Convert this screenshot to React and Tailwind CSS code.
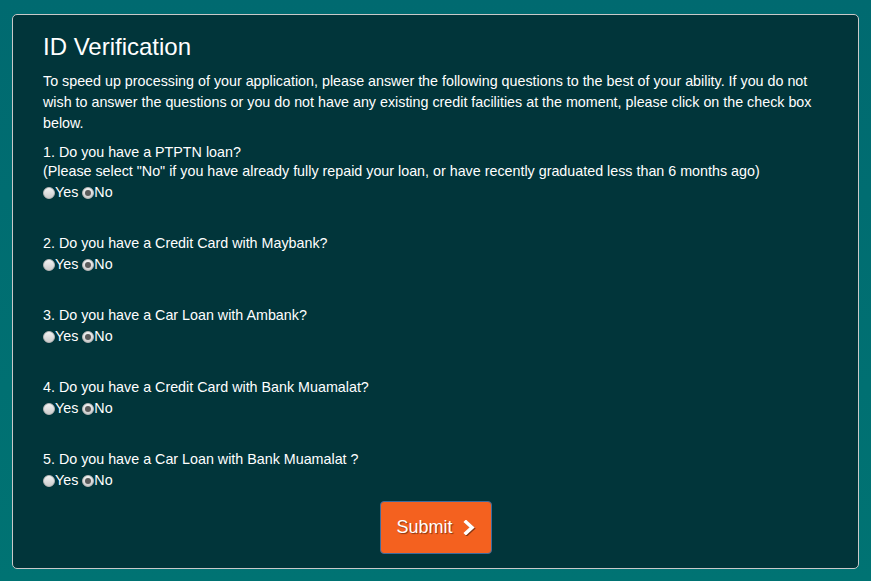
import React from 'react';

const questions = [
  {
    q: '1. Do you have a PTPTN loan?',
    note: '(Please select "No" if you have already fully repaid your loan, or have recently graduated less than 6 months ago)',
  },
  { q: '2. Do you have a Credit Card with Maybank?' },
  { q: '3. Do you have a Car Loan with Ambank?' },
  { q: '4. Do you have a Credit Card with Bank Muamalat?' },
  { q: '5. Do you have a Car Loan with Bank Muamalat ?' },
];

function Radio({ checked }) {
  return (
    <span className="inline-flex w-[12px] h-[12px] rounded-full border border-[#b9b9b9] bg-gradient-to-b from-[#f2f2f2] to-[#cdcdcd] items-center justify-center shrink-0">
      {checked && <span className="w-[6px] h-[6px] rounded-full bg-[#5a5a5a]" />}
    </span>
  );
}

export default function App() {
  return (
    <div
      className="min-h-[581px] bg-gradient-to-b from-[#006a70] to-[#007373] pt-[14px] px-[12px] pb-[13px] text-white"
      style={{ fontFamily: '"Liberation Sans", Arial, sans-serif' }}
    >
      <div className="border border-[#c9c9c9] rounded-[5px] bg-[#01353a] px-[30px] pt-[19px] pb-[14px]">
        {/* Header */}
        <h1 className="text-[24px] leading-[26px] mb-[11px]">ID Verification</h1>
        <p className="text-[14.3px] leading-[21px] mb-[8px]">
          To speed up processing of your application, please answer the following questions to the best of your ability. If you do not wish to answer the questions or you do not have any existing credit facilities at the moment, please click on the check box below.
        </p>

        {/* Questions */}
        {questions.map((item, idx) => (
          <div key={idx} className={idx === questions.length - 1 ? 'text-[14.3px]' : 'text-[14.3px] mb-[29px]'}>
            <div className="leading-[20px]">{item.q}</div>
            {item.note && <div className="leading-[19px]">{item.note}</div>}
            <div className="h-[23px] flex items-center">
              <Radio />
              <span>Yes</span>
              <span className="w-[4px]" />
              <Radio checked />
              <span>No</span>
            </div>
          </div>
        ))}

        {/* Submit */}
        <div className="flex justify-center mt-[9px]">
          <button className="w-[112px] h-[53px] bg-[#f4611f] border border-[#3d6b9e] rounded-[4px] flex items-center justify-center gap-[10px] text-[18px] text-white [text-shadow:1px_1px_1px_rgba(0,0,0,0.45)]">
            <span>Submit</span>
            <svg width="12" height="15" viewBox="0 0 12 15" className="drop-shadow-[1px_1px_0.5px_rgba(0,0,0,0.45)]">
              <polyline points="3,2 9,7.5 3,13" fill="none" stroke="white" strokeWidth="3.6" strokeLinecap="square" strokeLinejoin="miter" />
            </svg>
          </button>
        </div>
      </div>
    </div>
  );
}
